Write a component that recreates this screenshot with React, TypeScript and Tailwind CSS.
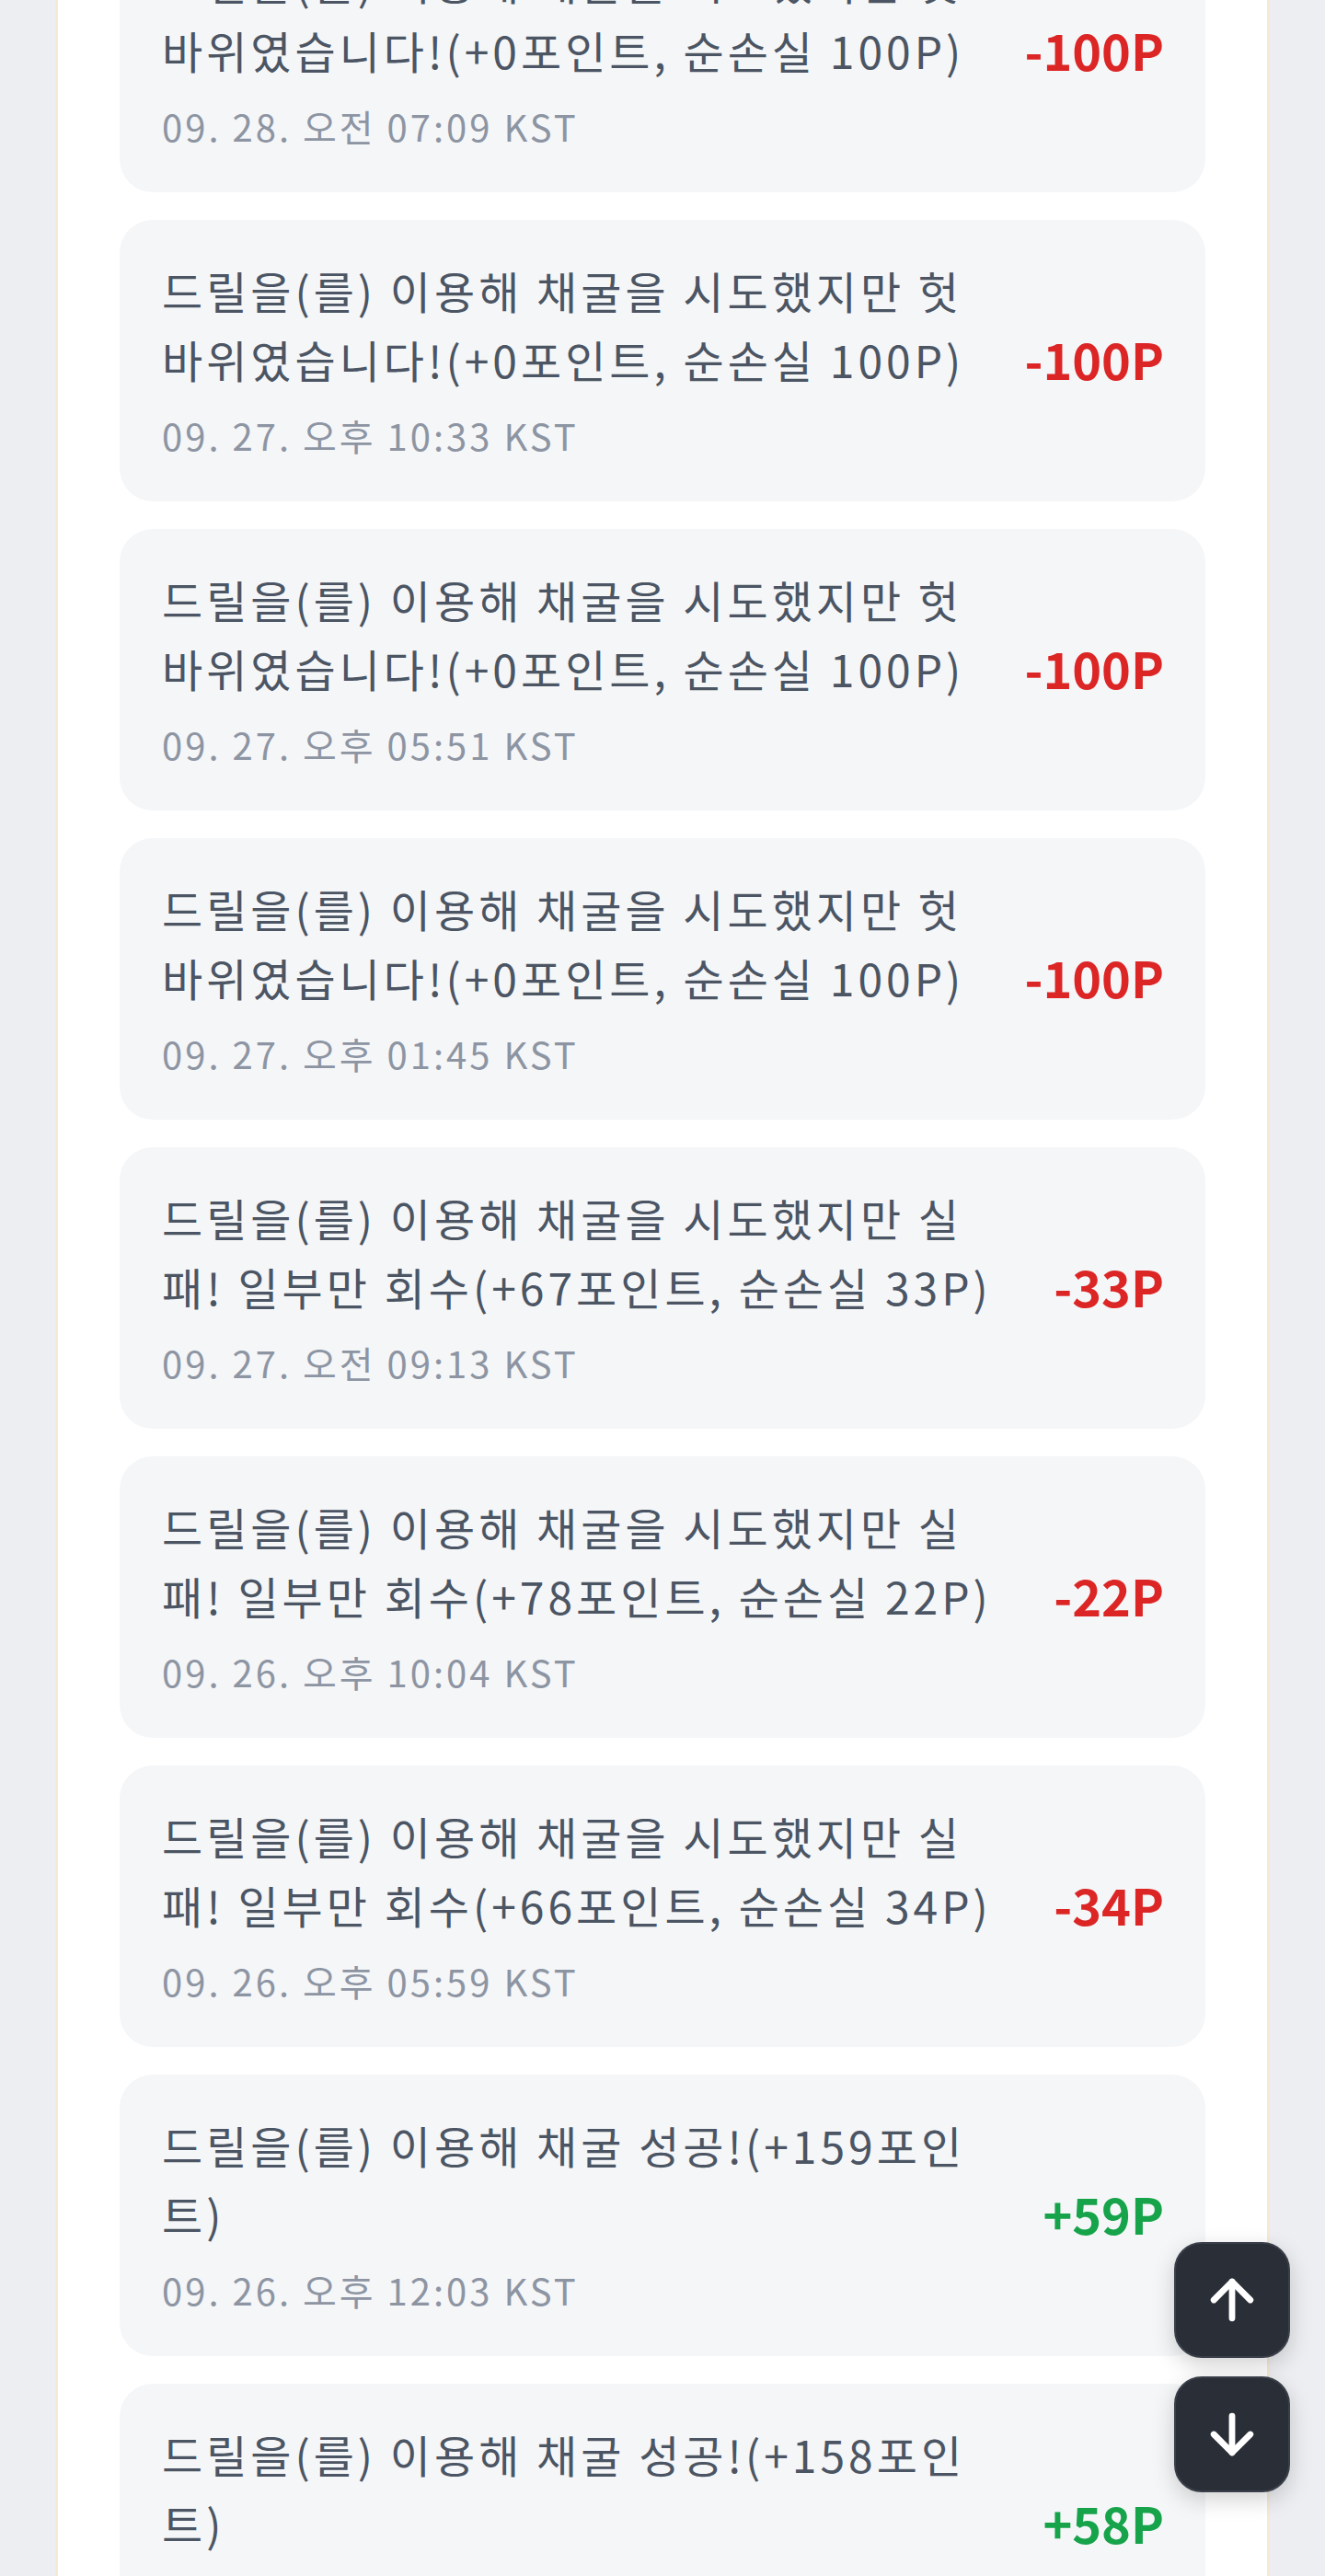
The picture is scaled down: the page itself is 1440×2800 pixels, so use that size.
import { ArrowDown, ArrowUp } from 'lucide-react'

type Entry = {
  lines: string[]
  time: string
  amount: string
  gain: boolean
}

const DUD = ['드릴을(를) 이용해 채굴을 시도했지만 헛', '바위였습니다!(+0포인트, 순손실 100P)']

const entries: Entry[] = [
  { lines: DUD, time: '09. 28. 오전 07:09 KST', amount: '-100P', gain: false },
  { lines: DUD, time: '09. 27. 오후 10:33 KST', amount: '-100P', gain: false },
  { lines: DUD, time: '09. 27. 오후 05:51 KST', amount: '-100P', gain: false },
  { lines: DUD, time: '09. 27. 오후 01:45 KST', amount: '-100P', gain: false },
  {
    lines: ['드릴을(를) 이용해 채굴을 시도했지만 실', '패! 일부만 회수(+67포인트, 순손실 33P)'],
    time: '09. 27. 오전 09:13 KST',
    amount: '-33P',
    gain: false,
  },
  {
    lines: ['드릴을(를) 이용해 채굴을 시도했지만 실', '패! 일부만 회수(+78포인트, 순손실 22P)'],
    time: '09. 26. 오후 10:04 KST',
    amount: '-22P',
    gain: false,
  },
  {
    lines: ['드릴을(를) 이용해 채굴을 시도했지만 실', '패! 일부만 회수(+66포인트, 순손실 34P)'],
    time: '09. 26. 오후 05:59 KST',
    amount: '-34P',
    gain: false,
  },
  { lines: ['드릴을(를) 이용해 채굴 성공!(+159포인', '트)'], time: '09. 26. 오후 12:03 KST', amount: '+59P', gain: true },
  { lines: ['드릴을(를) 이용해 채굴 성공!(+158포인', '트)'], time: '09. 26. 오전 07:41 KST', amount: '+58P', gain: true },
]

function HistoryCard({ entry }: { entry: Entry }) {
  return (
    <div className="flex items-center gap-12 rounded-[36px] bg-[#f5f6f8] pl-[46px] pr-[45px] pt-[39px] pb-[43px]">
      <div className="min-w-0 flex-1">
        <p className="text-[48px] leading-[75px] tracking-[4px] text-[#4b5563]">
          {entry.lines.map((line, i) => (
            <span key={i} className="block whitespace-nowrap">
              {line}
            </span>
          ))}
        </p>
        <p className="mt-[17px] whitespace-nowrap text-[40px] leading-[57px] tracking-[3px] text-[#8d95a3]">
          {entry.time}
        </p>
      </div>
      <span
        className={
          entry.gain
            ? 'shrink-0 text-[54px] font-bold leading-none text-[#16a34a]'
            : 'shrink-0 text-[54px] font-bold leading-none text-[#dc2626]'
        }
      >
        {entry.amount}
      </span>
    </div>
  )
}

export default function App() {
  return (
    <div
      className="relative h-[2800px] overflow-hidden bg-[#eceef1]"
      style={{ fontFamily: '"Noto Sans CJK KR", "Noto Sans", sans-serif' }}
    >
      <div className="mx-auto flex min-h-full w-[1320px] flex-col border-x-[3px] border-[#f6e9d8] bg-white px-[67px]">
        {/* scrolled list, first card partly above the fold */}
        <div className="-mt-[97px] flex flex-col gap-[30px]">
          {entries.map((e, i) => (
            <HistoryCard key={i} entry={e} />
          ))}
        </div>
      </div>

      {/* Scroll buttons */}
      <div className="fixed bottom-[91px] right-[38px] flex flex-col gap-5">
        <button className="flex h-[126px] w-[126px] items-center justify-center rounded-[30px] border-2 border-[#3a3f49] bg-[#2a2e37] shadow-[0_8px_24px_rgba(0,0,0,0.18)]">
          <ArrowUp size={68} strokeWidth={2.4} color="#ffffff" />
        </button>
        <button className="flex h-[126px] w-[126px] items-center justify-center rounded-[30px] border-2 border-[#3a3f49] bg-[#2a2e37] shadow-[0_8px_24px_rgba(0,0,0,0.18)]">
          <ArrowDown size={68} strokeWidth={2.4} color="#ffffff" />
        </button>
      </div>
    </div>
  )
}
